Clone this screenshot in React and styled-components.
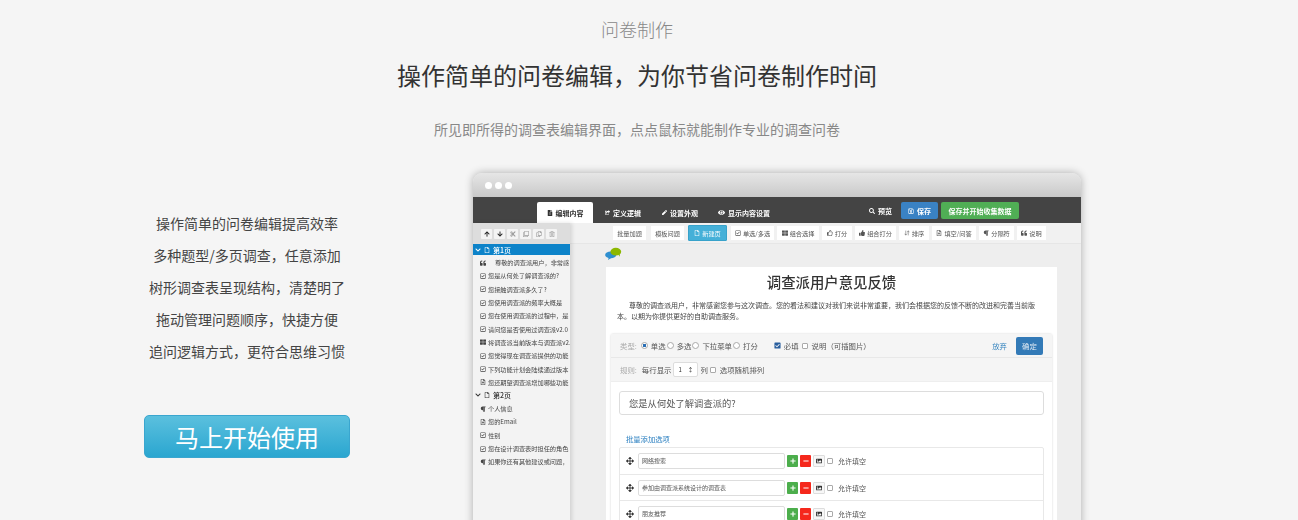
import styled, { createGlobalStyle } from "styled-components";
import { ArrowDownUp } from "lucide-react";
import {
  FaArrowDown, FaArrowUp, FaArrowsAlt, FaCheckSquare, FaChevronDown, FaCut, FaEye, FaFileAlt, FaImage,
  FaMinus, FaParagraph, FaPen, FaPlus, FaQuoteLeft, FaRegCheckSquare, FaRegClone, FaRegCopy, FaRegFile,
  FaRegFileAlt, FaRegSave, FaRegThumbsUp, FaRegTrashAlt, FaSearch, FaShareSquare, FaThLarge, FaThumbsUp,
} from "react-icons/fa";

const CJK = `"Noto Sans CJK SC", "Liberation Sans", sans-serif`;

const GlobalStyle = createGlobalStyle`
  html, body { margin: 0; height: 520px; overflow: hidden; background: #f5f5f5; }
  body { font-family: ${CJK}; }
  * { box-sizing: border-box; }
`;

const Page = styled.div`
  width: 1274px;
  height: 520px;
  overflow: hidden;
`;

const Header = styled.header`
  display: flex;
  flex-direction: column;
  align-items: center;
  padding-top: 16px;
`;

const Kicker = styled.div`
  font-size: 18px;
  line-height: 27px;
  font-weight: 300;
  color: #888;
`;

const Title = styled.h1`
  margin: 16px 0 0;
  font-size: 24px;
  line-height: 32px;
  font-weight: 400;
  color: #333;
`;

const Subtitle = styled.p`
  margin: 27px 0 0;
  font-size: 14px;
  line-height: 22px;
  font-weight: 400;
  color: #888;
`;

const Feature = styled.section`
  display: flex;
  margin-top: 33px;
`;

const Pitch = styled.div`
  width: 473px;
  flex: none;
  padding: 34px 0 0 144px;
`;

const PitchText = styled.div`
  width: 206px;
  text-align: center;
  font-size: 14px;
  line-height: 32px;
  color: #444;
  white-space: nowrap;
`;

const StartButton = styled.button`
  display: block;
  width: 206px;
  height: 43px;
  margin-top: 48px;
  padding: 0;
  border: 1px solid #3aa6cf;
  border-radius: 5px;
  background: linear-gradient(#5bc0de, #2aa6d0);
  color: #fff;
  font-family: ${CJK};
  font-size: 24px;
  font-weight: 400;
`;

const Shot = styled.div`
  width: 608px;
  height: 380px;
  flex: none;
  border-radius: 9px 9px 0 0;
  background: #eee;
  box-shadow: 0 0 9px rgba(0, 0, 0, 0.3);
  overflow: hidden;
  filter: blur(0.25px);
`;

const TitleBar = styled.div`
  display: flex;
  gap: 3px;
  align-items: center;
  height: 24px;
  padding-left: 12px;
  background: linear-gradient(#e6e6e6, #c9c9c9);
`;

const Dot = styled.span`
  width: 7px;
  height: 7px;
  border-radius: 50%;
  background: #fff;
`;

const DarkBar = styled.div`
  display: flex;
  align-items: flex-end;
  height: 26px;
  padding-left: 64px;
  background: #444;
  color: #fff;
  font-size: 7px;
  font-weight: 700;
`;

const Tab = styled.div`
  display: flex;
  align-items: center;
  justify-content: center;
  gap: 3px;
  width: ${(p) => p.$w}px;
  height: 21px;
  white-space: nowrap;
  color: ${(p) => (p.$active ? "#333" : "#fff")};
  background: ${(p) => (p.$active ? "#fff" : "transparent")};
  border-radius: 2px 2px 0 0;
`;

const BarRight = styled.div`
  display: flex;
  align-items: center;
  gap: 3px;
  align-self: flex-start;
  margin: 5px 0 0 88px;
`;

const Preview = styled.div`
  display: flex;
  align-items: center;
  gap: 3px;
  margin-right: 6px;
`;

const BarButton = styled.div`
  display: flex;
  align-items: center;
  justify-content: center;
  gap: 3px;
  width: ${(p) => p.$w}px;
  height: 17px;
  border-radius: 2px;
  background: ${(p) => p.$bg};
`;

const Body = styled.div`
  display: flex;
  height: 330px;
`;

const Sidebar = styled.aside`
  width: 97px;
  flex: none;
  background: #f3f3f3;
  box-shadow: 2px 0 4px rgba(0, 0, 0, 0.12);
  overflow: hidden;
  position: relative;
  z-index: 1;
`;

const SideTools = styled.div`
  display: flex;
  gap: 2px;
  align-items: center;
  height: 21px;
  padding-left: 8px;
  background: #ddd;
`;

const SideTool = styled.span`
  display: flex;
  align-items: center;
  justify-content: center;
  width: 11px;
  height: 10px;
  background: #f4f4f4;
  border-radius: 1px;
  color: ${(p) => (p.$off ? "#999" : "#222")};
  font-size: 6px;
`;

const PageRow = styled.div`
  display: flex;
  align-items: center;
  gap: 3px;
  height: ${(p) => (p.$active ? 11 : 13)}px;
  margin-bottom: ${(p) => (p.$active ? 1 : 0)}px;
  padding-left: 2px;
  font-size: 7px;
  font-weight: 500;
  white-space: nowrap;
  color: ${(p) => (p.$active ? "#fff" : "#333")};
  background: ${(p) => (p.$active ? "#0d83c9" : "transparent")};
`;

const TreeRow = styled.div`
  display: flex;
  align-items: center;
  gap: ${(p) => p.$gap || 2}px;
  height: 13.3px;
  padding-left: 7px;
  font-size: 6.2px;
  white-space: nowrap;
  color: #444;

  svg { flex: none; color: #444; }
`;

const Main = styled.main`
  flex: 1;
  min-width: 0;
`;

const Toolbar = styled.div`
  display: flex;
  gap: 1px;
  height: 21px;
  padding: 2px 0 0 42px;
  background: #f1f1f1;
  border-bottom: 1px solid #e6e6e6;
`;

const ToolButton = styled.div`
  display: flex;
  align-items: center;
  justify-content: center;
  gap: 2px;
  width: ${(p) => p.$w}px;
  margin-right: ${(p) => p.$gap || 0}px;
  height: 16px;
  font-size: 6.2px;
  white-space: nowrap;
  color: ${(p) => (p.$active ? "#fff" : "#555")};
  background: ${(p) => (p.$active ? "#45b0d8" : "#fff")};
  border: 1px solid ${(p) => (p.$active ? "#38a2ca" : "#f1f1f1")};
  border-radius: 1px;
`;

const LogoRow = styled.div`
  height: 23px;
  padding: 3px 0 0 35px;

  svg { display: block; }
`;

const Paper = styled.div`
  width: 451px;
  height: 260px;
  margin-left: 36px;
  padding: 5px 5px 0;
  background: #fff;
`;

const PaperTitle = styled.h2`
  margin: 0;
  text-align: center;
  font-size: 14.4px;
  line-height: 20px;
  font-weight: 500;
  color: #333;
`;

const Intro = styled.p`
  margin: 8px 14px 0 6px;
  font-size: 7px;
  line-height: 11px;
  text-indent: 12px;
  color: #444;
`;

const Editor = styled.div`
  margin-top: 12px;
  border-radius: 2px;
  box-shadow: 0 0 2px rgba(0, 0, 0, 0.22);
`;

const EditorHead = styled.div`
  background: #f5f5f5;
  font-size: 7.4px;
  color: #555;
`;

const TypeRow = styled.div`
  display: flex;
  align-items: center;
  gap: 1px;
  height: 24px;
  padding: 0 9px 0 9px;
  border-bottom: 1px solid #e8e8e8;
  white-space: nowrap;
`;

const RuleRow = styled.div`
  display: flex;
  align-items: center;
  gap: 2px;
  height: 24px;
  padding-left: 9px;
  white-space: nowrap;
  border-bottom: 1px solid #eee;
`;

const Muted = styled.span`
  margin-right: 3px;
  color: #aaa;
`;

const Radio = styled.span`
  flex: none;
  width: 7px;
  height: 7px;
  margin-right: 2px;
  border-radius: 50%;
  border: 1px solid #aaa;
  background: ${(p) => (p.$on ? "radial-gradient(#2a6fb5 40%, #fff 50%)" : "#fff")};
`;

const Required = styled.span`
  display: flex;
  align-items: center;
  gap: 3px;
  margin: 0 2px 0 15px;
`;

const Check = styled.span`
  flex: none;
  width: 6px;
  height: 6px;
  margin-right: ${(p) => p.$gap || 0}px;
  border: 1px solid #aaa;
  border-radius: 1px;
  background: #fff;
`;

const Discard = styled.span`
  margin-left: auto;
  margin-right: 8px;
  color: #3a87c0;
`;

const Confirm = styled.span`
  display: flex;
  align-items: center;
  justify-content: center;
  width: 27px;
  height: 18px;
  border-radius: 2px;
  background: #337ab7;
  color: #dfe9f2;
`;

const Stepper = styled.span`
  display: flex;
  justify-content: space-between;
  width: 25px;
  height: 15px;
  padding: 0 4px;
  line-height: 13px;
  background: #fff;
  border: 1px solid #ddd;
  border-radius: 2px;
  color: #333;
  font-size: 6px;
`;

const EditorBody = styled.div`
  padding: 9px 8px 0;
`;

const QuestionInput = styled.div`
  height: 24px;
  padding-left: 9px;
  border: 1px solid #ddd;
  border-radius: 3px;
  font-size: 9.3px;
  line-height: 22px;
  color: #555;
`;

const BulkLink = styled.div`
  margin: 18px 0 2px 7px;
  font-size: 7.3px;
  line-height: 12px;
  color: #2a7fc0;
`;

const Options = styled.div`
  border: 1px solid #e8e8e8;
  border-radius: 2px;
`;

const OptionRow = styled.div`
  display: flex;
  align-items: center;
  height: 26px;
  padding-left: 6px;
  border-top: ${(p) => (p.$first ? "none" : "1px solid #e8e8e8")};
`;

const Drag = styled.span`
  display: flex;
  width: 12px;
  font-size: 8px;
  color: #333;
`;

const OptionInput = styled.div`
  width: 147px;
  height: 16px;
  padding-left: 3px;
  border: 1px solid #ddd;
  border-radius: 2px;
  font-size: 6px;
  line-height: 14px;
  color: #555;
`;

const Square = styled.span`
  display: flex;
  align-items: center;
  justify-content: center;
  width: ${(p) => p.$w || 11}px;
  height: 12px;
  margin-left: 2px;
  border-radius: 1px;
  font-size: 6px;
  color: ${(p) => p.$fg || "#fff"};
  background: ${(p) => p.$bg};
  border: ${(p) => (p.$line ? "1px solid #ddd" : "none")};
`;

const AllowFill = styled.span`
  display: flex;
  align-items: center;
  gap: 5px;
  margin-left: 2px;
  font-size: 7px;
  color: #555;
`;

const firstPage = [
  [FaRegCheckSquare, "您是从何处了解调查派的?"],
  [FaRegCheckSquare, "您接触调查派多久了?"],
  [FaRegCheckSquare, "您使用调查派的频率大概是"],
  [FaRegCheckSquare, "您在使用调查派的过程中，是"],
  [FaRegCheckSquare, "请问您是否使用过调查派v2.0"],
  [FaThLarge, "将调查派当前版本与调查派v2."],
  [FaRegCheckSquare, "您觉得现在调查派提供的功能"],
  [FaRegCheckSquare, "下列功能计划会陆续通过版本"],
  [FaRegFileAlt, "您还期望调查派增加哪些功能"],
];

const secondPage = [
  [FaParagraph, "个人信息"],
  [FaRegFileAlt, "您的Email"],
  [FaRegCheckSquare, "性别"],
  [FaRegCheckSquare, "您在设计调查表时担任的角色"],
  [FaParagraph, "如果你还有其他建议或问题，"],
];

const tools = [
  ["批量加题", 35, null, 2],
  ["模板问题", 35, null, 2],
  ["新建页", 39, FaRegFile, 2],
  ["单选/多选", 45, FaRegCheckSquare],
  ["组合选择", 44, FaThLarge],
  ["打分", 32, FaRegThumbsUp],
  ["组合打分", 43, FaThumbsUp],
  ["排序", 32, ArrowDownUp],
  ["填空/问答", 46, FaRegFileAlt],
  ["分隔符", 37, FaParagraph],
  ["说明", 31, FaQuoteLeft],
];

const options = ["网络搜索", "参加由调查派系统设计的调查表", "朋友推荐"];

const App = () => (
  <Page>
    <GlobalStyle />
    <Header>
      <Kicker>问卷制作</Kicker>
      <Title>操作简单的问卷编辑，为你节省问卷制作时间</Title>
      <Subtitle>所见即所得的调查表编辑界面，点点鼠标就能制作专业的调查问卷</Subtitle>
    </Header>
    <Feature>
      <Pitch>
        <PitchText>操作简单的问卷编辑提高效率</PitchText>
        <PitchText>多种题型/多页调查，任意添加</PitchText>
        <PitchText>树形调查表呈现结构，清楚明了</PitchText>
        <PitchText>拖动管理问题顺序，快捷方便</PitchText>
        <PitchText>追问逻辑方式，更符合思维习惯</PitchText>
        <StartButton>马上开始使用</StartButton>
      </Pitch>
      <Shot>
        <TitleBar>
          <Dot />
          <Dot />
          <Dot />
        </TitleBar>
        <DarkBar>
          <Tab $active $w={56}><FaFileAlt size={6} />编辑内容</Tab>
          <Tab $w={60}><FaShareSquare size={5} />定义逻辑</Tab>
          <Tab $w={54}><FaPen size={5} />设置外观</Tab>
          <Tab $w={74}><FaEye size={7} />显示内容设置</Tab>
          <BarRight>
            <Preview><FaSearch size={6} />预览</Preview>
            <BarButton $w={37} $bg="#3a82c4"><FaRegSave size={6} />保存</BarButton>
            <BarButton $w={78} $bg="#50ae55">保存并开始收集数据</BarButton>
          </BarRight>
        </DarkBar>
        <Body>
          <Sidebar>
            <SideTools>
              <SideTool><FaArrowUp /></SideTool>
              <SideTool><FaArrowDown /></SideTool>
              <SideTool $off><FaCut /></SideTool>
              <SideTool $off><FaRegClone /></SideTool>
              <SideTool $off><FaRegCopy /></SideTool>
              <SideTool $off><FaRegTrashAlt /></SideTool>
            </SideTools>
            <PageRow $active><FaChevronDown size={6} /><FaRegFile size={6} />第1页</PageRow>
            <TreeRow $gap={9}><FaQuoteLeft size={6} />尊敬的调查派用户，非常感</TreeRow>
            {firstPage.map(([Icon, text]) => (
              <TreeRow key={text}><Icon size={6} />{text}</TreeRow>
            ))}
            <PageRow><FaChevronDown size={6} /><FaRegFile size={6} />第2页</PageRow>
            {secondPage.map(([Icon, text]) => (
              <TreeRow key={text}><Icon size={6} />{text}</TreeRow>
            ))}
          </Sidebar>
          <Main>
            <Toolbar>
              {tools.map(([text, w, Icon, gap]) => (
                <ToolButton key={text} $w={w} $gap={gap} $active={text === "新建页"}>
                  {Icon && <Icon size={6} />}
                  {text}
                </ToolButton>
              ))}
            </Toolbar>
            <LogoRow>
              <svg width="17" height="13" viewBox="0 0 18 14">
                <ellipse cx="6" cy="8.500" rx="6" ry="3.600" fill="#2f8fd0" />
                <path d="M4 11l-1 3 4-2.500z" fill="#2f8fd0" />
                <ellipse cx="11.500" cy="5" rx="5.800" ry="4.200" fill="#8cb800" />
                <path d="M14 8l2 2.500-.5-4z" fill="#8cb800" />
              </svg>
            </LogoRow>
            <Paper>
              <PaperTitle>调查派用户意见反馈</PaperTitle>
              <Intro>
                尊敬的调查派用户，非常感谢您参与这次调查。您的看法和建议对我们来说非常重要，我们会根据您的反馈不断的改进和完善当前版本。以期为你提供更好的自助调查服务。
              </Intro>
              <Editor>
                <EditorHead>
                  <TypeRow>
                    <Muted>类型:</Muted>
                    <Radio $on />单选
                    <Radio />多选
                    <Radio />下拉菜单
                    <Radio />打分
                    <Required><FaCheckSquare size={7} color="#2a5f9e" />必填</Required>
                    <Check $gap={3} />
                    说明（可插图片）
                    <Discard>放弃</Discard>
                    <Confirm>确定</Confirm>
                  </TypeRow>
                  <RuleRow>
                    <Muted>规则:</Muted>
                    每行显示
                    <Stepper>1<span>↕</span></Stepper>
                    列
                    <Check $gap={2} />
                    选项随机排列
                  </RuleRow>
                </EditorHead>
                <EditorBody>
                  <QuestionInput>您是从何处了解调查派的?</QuestionInput>
                  <BulkLink>批量添加选项</BulkLink>
                  <Options>
                    {options.map((text, i) => (
                      <OptionRow key={text} $first={i === 0}>
                        <Drag><FaArrowsAlt /></Drag>
                        <OptionInput>{text}</OptionInput>
                        <Square $bg="#4cae4c"><FaPlus /></Square>
                        <Square $bg="#f5281c"><FaMinus /></Square>
                        <Square $w={12} $bg="#f7f7f7" $fg="#333" $line><FaImage /></Square>
                        <AllowFill><Check />允许填空</AllowFill>
                      </OptionRow>
                    ))}
                  </Options>
                </EditorBody>
              </Editor>
            </Paper>
          </Main>
        </Body>
      </Shot>
    </Feature>
  </Page>
);

export default App;
